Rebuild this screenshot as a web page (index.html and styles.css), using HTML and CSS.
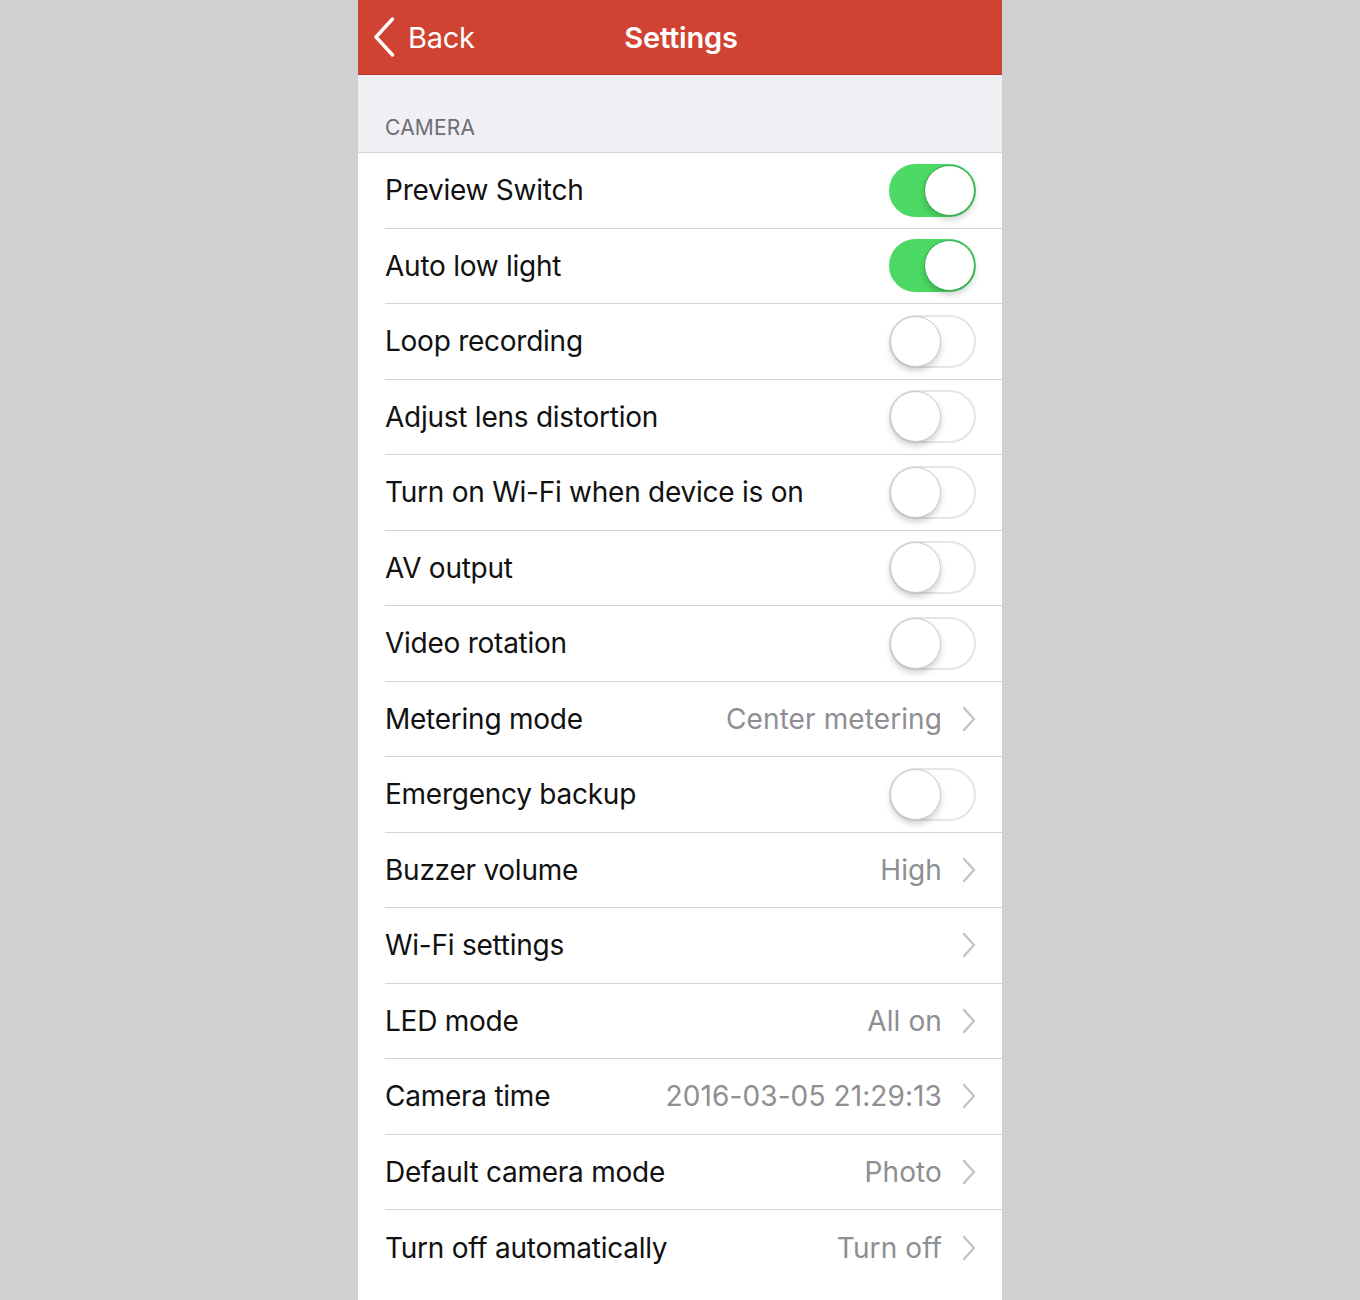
FILE: index.html
```html
<!DOCTYPE html>
<html lang="en">
  <head>
    <meta charset="UTF-8" />
    <meta name="viewport" content="width=device-width, initial-scale=1.0" />
    <title>Settings</title>
    <link rel="stylesheet" href="styles.css">
  </head>
  <body>
    <div class="screen">
      <div class="nav">
        <div class="back">
          <svg class="back-icon" width="22" height="40" viewBox="0 0 22 40">
            <path d="M19.5 2 L3 20 L19.5 38" fill="none" stroke="#fff" stroke-width="3.4" stroke-linecap="round" stroke-linejoin="round" />
          </svg>
          <span>Back</span>
        </div>
        <div class="title">Settings</div>
      </div>

      <div class="section-head">CAMERA</div>

      <div class="list">
        <div class="row">
          <span class="label">Preview Switch</span>
          <span class="switch on"><span class="knob"></span></span>
        </div>
        <div class="row">
          <span class="label">Auto low light</span>
          <span class="switch on"><span class="knob"></span></span>
        </div>
        <div class="row">
          <span class="label">Loop recording</span>
          <span class="switch"><span class="knob"></span></span>
        </div>
        <div class="row">
          <span class="label">Adjust lens distortion</span>
          <span class="switch"><span class="knob"></span></span>
        </div>
        <div class="row">
          <span class="label">Turn on Wi-Fi when device is on</span>
          <span class="switch"><span class="knob"></span></span>
        </div>
        <div class="row">
          <span class="label">AV output</span>
          <span class="switch"><span class="knob"></span></span>
        </div>
        <div class="row">
          <span class="label">Video rotation</span>
          <span class="switch"><span class="knob"></span></span>
        </div>
        <div class="row">
          <span class="label">Metering mode</span>
          <span class="detail">Center metering<svg class="chev" width="14" height="26" viewBox="0 0 14 26"><path d="M2 2 L12 13 L2 24" /></svg></span>
        </div>
        <div class="row">
          <span class="label">Emergency backup</span>
          <span class="switch"><span class="knob"></span></span>
        </div>
        <div class="row">
          <span class="label">Buzzer volume</span>
          <span class="detail">High<svg class="chev" width="14" height="26" viewBox="0 0 14 26"><path d="M2 2 L12 13 L2 24" /></svg></span>
        </div>
        <div class="row">
          <span class="label">Wi-Fi settings</span>
          <span class="detail"><svg class="chev" width="14" height="26" viewBox="0 0 14 26"><path d="M2 2 L12 13 L2 24" /></svg></span>
        </div>
        <div class="row">
          <span class="label">LED mode</span>
          <span class="detail">All on<svg class="chev" width="14" height="26" viewBox="0 0 14 26"><path d="M2 2 L12 13 L2 24" /></svg></span>
        </div>
        <div class="row">
          <span class="label">Camera time</span>
          <span class="detail">2016-03-05 21:29:13<svg class="chev" width="14" height="26" viewBox="0 0 14 26"><path d="M2 2 L12 13 L2 24" /></svg></span>
        </div>
        <div class="row">
          <span class="label">Default camera mode</span>
          <span class="detail">Photo<svg class="chev" width="14" height="26" viewBox="0 0 14 26"><path d="M2 2 L12 13 L2 24" /></svg></span>
        </div>
        <div class="row">
          <span class="label">Turn off automatically</span>
          <span class="detail">Turn off<svg class="chev" width="14" height="26" viewBox="0 0 14 26"><path d="M2 2 L12 13 L2 24" /></svg></span>
        </div>
      </div>
    </div>
  </body>
</html>
```

FILE: styles.css
```css
html,
body {
  margin: 0;
  padding: 0;
}

body {
  background: #d0d0d0;
  font-family: Inter, "Noto Sans", sans-serif;
  height: 1300px;
  overflow: hidden;
}

.screen {
  width: 644px;
  margin: 0 auto;
  background: #fff;
  min-height: 1300px;
}

.nav {
  position: relative;
  height: 75px;
  background: #d04333;
  border-bottom: 1px solid #b8392b;
  box-sizing: border-box;
  display: flex;
  align-items: center;
  justify-content: center;
  color: #fff;
}

.back {
  position: absolute;
  left: 15px;
  top: 17px;
  display: flex;
  align-items: center;
  gap: 13px;
  font-size: 29px;
  letter-spacing: -0.3px;
}

.title {
  font-size: 29px;
  font-weight: 600;
  letter-spacing: -0.2px;
  margin-left: 2px;
}

.section-head {
  height: 78px;
  background: #efeff4;
  border-bottom: 1px solid #d6d6da;
  box-sizing: border-box;
  padding: 0 0 12px 27px;
  display: flex;
  align-items: flex-end;
  font-size: 21px;
  color: #6d6d72;
  letter-spacing: 0.2px;
}

.row {
  height: 75.5px;
  box-sizing: border-box;
  margin-left: 27px;
  padding-right: 26px;
  border-bottom: 1px solid #d4d4d8;
  display: flex;
  align-items: center;
  justify-content: space-between;
}

.row:last-child {
  border-bottom: none;
}

.label {
  font-size: 28px;
  color: #111;
  letter-spacing: -0.25px;
}

.detail {
  display: flex;
  align-items: center;
  font-size: 28px;
  color: #8e8e93;
  letter-spacing: 0.1px;
}

.chev {
  margin-left: 20px;
}

.chev path {
  fill: none;
  stroke: #c4c4c8;
  stroke-width: 2.4;
  stroke-linecap: round;
  stroke-linejoin: round;
}

.switch {
  position: relative;
  width: 87px;
  height: 53px;
  border-radius: 27px;
  box-sizing: border-box;
  border: 2px solid #e5e5e5;
  background: #fff;
}

.switch.on {
  background: #4cd964;
  border-color: #4cd964;
}

.knob {
  position: absolute;
  top: -1px;
  left: -1px;
  width: 51px;
  height: 51px;
  border-radius: 50%;
  background: #fff;
  box-sizing: border-box;
  border: 1px solid #c8c8c8;
  box-shadow: 0 4px 6px rgba(0, 0, 0, 0.18);
}

.switch.on .knob {
  left: auto;
  right: -1px;
  border-color: #2fa84a;
}
```
